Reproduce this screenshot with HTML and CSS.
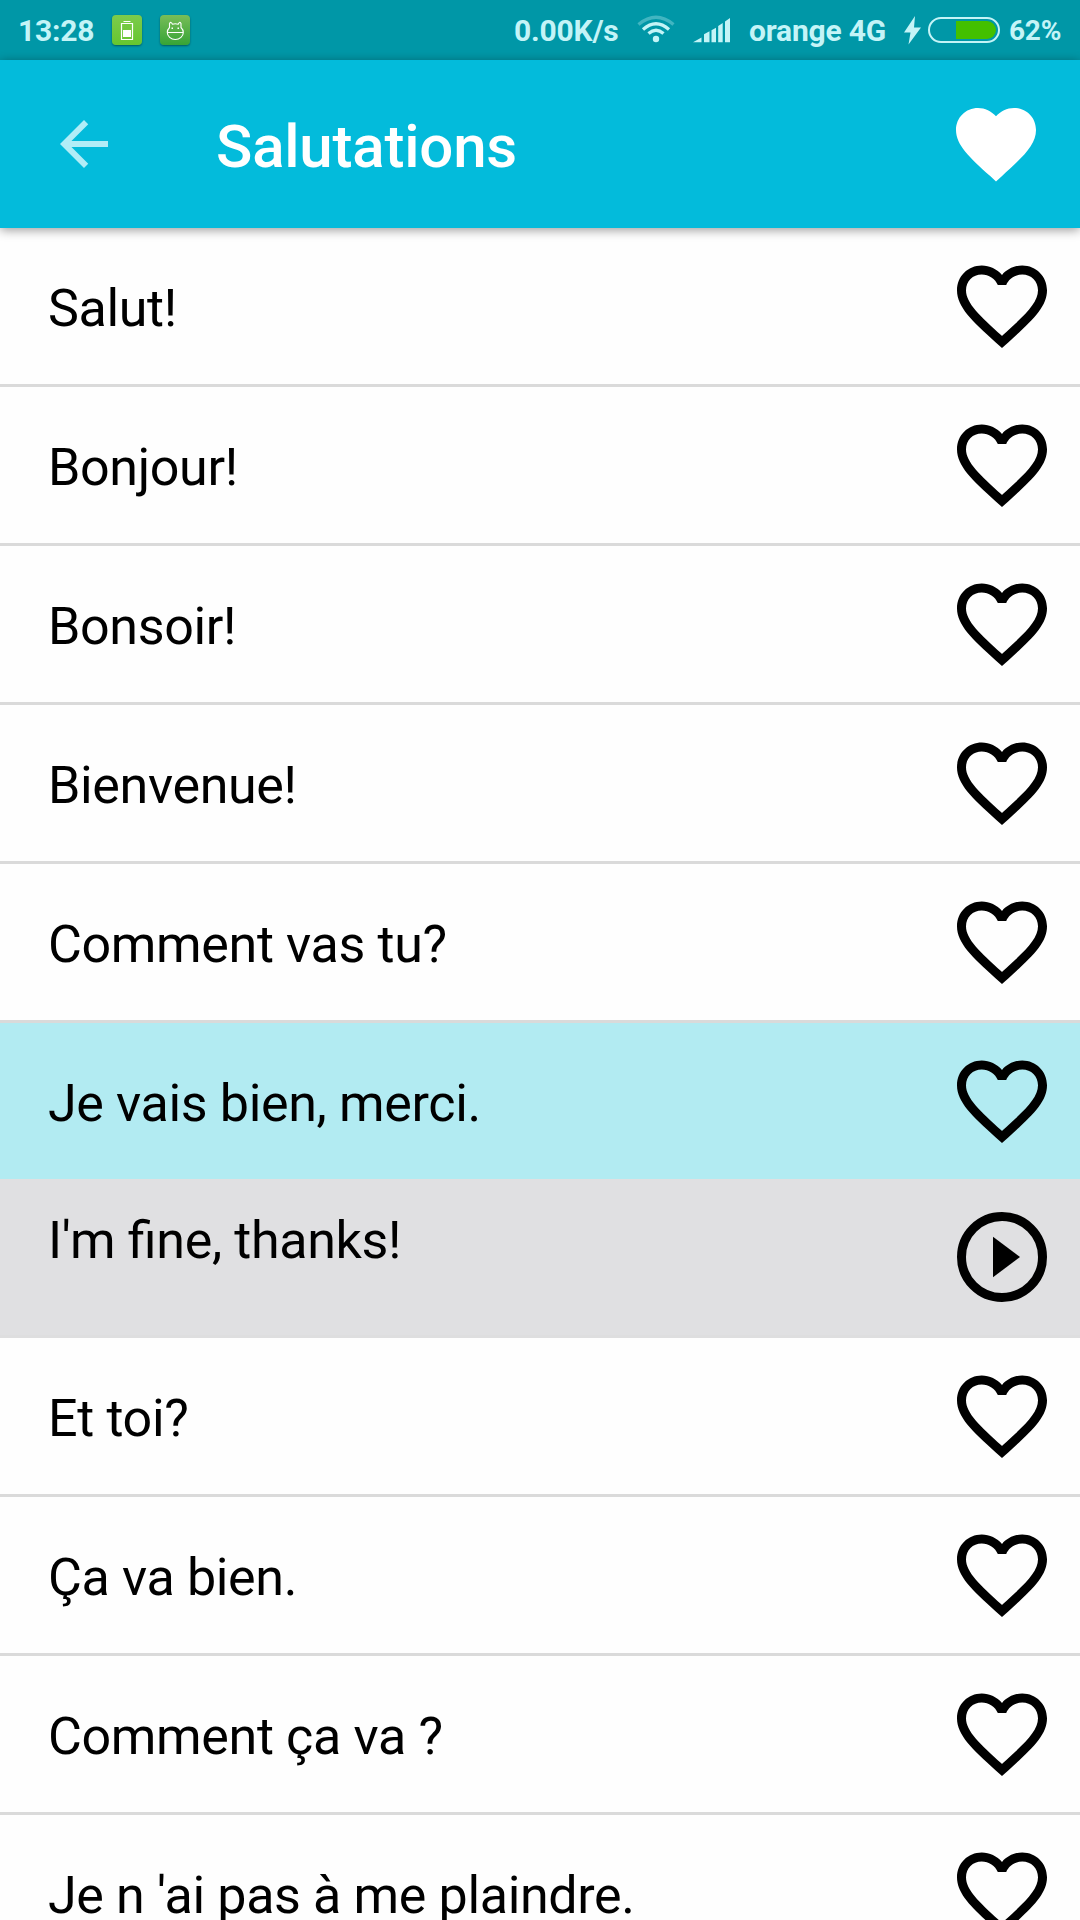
FILE: index.html
```html
<!DOCTYPE html>
<html lang="fr">
<head>
<meta charset="utf-8">
<title>Salutations</title>
<link rel="stylesheet" href="styles.css">
</head>
<body>
<svg class="defs" width="0" height="0" aria-hidden="true">
  <symbol id="heart-outline" viewBox="0 0 24 24"><path d="M16.5 3c-1.74 0-3.41.81-4.5 2.09C10.91 3.81 9.24 3 7.5 3 4.42 3 2 5.42 2 8.5c0 3.78 3.4 6.86 8.55 11.54L12 21.35l1.45-1.32C18.6 15.36 22 12.28 22 8.5 22 5.42 19.58 3 16.5 3zm-4.4 15.55l-.1.1-.1-.1C7.14 14.24 4 11.39 4 8.5 4 6.5 5.5 5 7.5 5c1.54 0 3.04.99 3.57 2.36h1.87C13.46 5.99 14.96 5 16.5 5c2 0 3.5 1.5 3.5 3.5 0 2.89-3.14 5.74-7.9 10.05z"/></symbol>
</svg>
<div class="screen">
  <div class="status">
    <span class="clock">13:28</span>
    <span class="badge badge-light"><svg width="30" height="30" viewBox="0 0 30 30"><path d="M9.5 8.5h11v16h-11zM11.5 6.500h7" fill="none" stroke="#fff" stroke-width="1.2"/><path d="M11 15h8v7h-8z" fill="#fff"/></svg></span>
    <span class="badge badge-dark"><svg width="30" height="30" viewBox="0 0 30 30"><path d="M9.500 12.500V8.500Q11 6 12.500 9.200q2.800-.9 5.600 0Q19.500 6 21 8.500v4q2.300 2.200 2.300 5a8 7 0 0 1-16 0q0-2.800 2.200-5zM7 17.500h16.500" fill="none" stroke="#fff" stroke-width="1.1"/><path d="M11.500 12.500H13V14h-1.500zM17.500 12.500H19V14h-1.500z" fill="#fff"/></svg></span>
    <span class="speed">0.00K/s</span>
    <svg class="wifi" width="38" height="28" viewBox="0 0 38 28"><circle cx="19" cy="24" r="3.200" fill="#c4f4f7"/><g fill="none" stroke="#c4f4f7" stroke-width="3.300"><path d="M11.500 18.500q7.500-6.500 15 0M6 14.500q13-11.500 26 0"/><path d="M1.500 9.500q17.500-14.500 35 0" stroke-opacity=".33"/></g></svg>
    <svg class="signal" width="38" height="26" viewBox="0 0 38 26"><path d="M0 25.300 8.500 20.500V25.300zM11 17.300l5.500-3V25.300H11zM18.500 13.300l4.500-2.500V25.300h-4.500zM25.200 9l4.500-3V25.300h-4.500zM32 4.500l5-3.500V25.300h-5z" fill="#c4f4f7"/></svg>
    <span class="carrier">orange 4G</span>
    <svg class="bolt" width="17" height="29" viewBox="0 0 17 29"><path d="M11 0 0 16.500h6.500L4.500 28.500 17 11.500h-7z" fill="#c4f4f7"/></svg>
    <span class="battery"><span class="charge"></span></span>
    <span class="percent">62%</span>
  </div>
  <header class="toolbar">
    <svg class="back" width="72" height="72" viewBox="0 0 24 24"><path d="M20 11H7.830l5.590-5.590L12 4l-8 8 8 8 1.410-1.410L7.830 13H20v-2z" fill="#b2edf7"/></svg>
    <h1 class="title">Salutations</h1>
    <svg class="favorite" width="96" height="96" viewBox="0 0 24 24"><path d="M12 21.350l-1.450-1.320C5.400 15.360 2 12.280 2 8.500 2 5.420 4.420 3 7.500 3c1.740 0 3.410.81 4.500 2.090C13.090 3.810 14.760 3 16.500 3 19.580 3 22 5.420 22 8.500c0 3.780-3.400 6.860-8.550 11.540L12 21.350z" fill="#fff"/></svg>
  </header>
  <main class="list">
    <div class="row"><span class="phrase">Salut!</span><svg class="icon"><use href="#heart-outline"/></svg></div>
    <div class="row"><span class="phrase">Bonjour!</span><svg class="icon"><use href="#heart-outline"/></svg></div>
    <div class="row"><span class="phrase">Bonsoir!</span><svg class="icon"><use href="#heart-outline"/></svg></div>
    <div class="row"><span class="phrase">Bienvenue!</span><svg class="icon"><use href="#heart-outline"/></svg></div>
    <div class="row"><span class="phrase">Comment vas tu?</span><svg class="icon"><use href="#heart-outline"/></svg></div>
    <div class="row selected"><span class="phrase">Je vais bien, merci.</span><svg class="icon"><use href="#heart-outline"/></svg></div>
    <div class="row translation"><span class="phrase">I'm fine, thanks!</span><svg class="icon" viewBox="0 0 24 24"><circle cx="12" cy="12" r="9" fill="none" stroke="#000" stroke-width="2"/><path d="M10 7.500v9l6-4.500z"/></svg></div>
    <div class="row"><span class="phrase">Et toi?</span><svg class="icon"><use href="#heart-outline"/></svg></div>
    <div class="row"><span class="phrase">Ça va bien.</span><svg class="icon"><use href="#heart-outline"/></svg></div>
    <div class="row"><span class="phrase">Comment ça va ?</span><svg class="icon"><use href="#heart-outline"/></svg></div>
    <div class="row"><span class="phrase">Je n 'ai pas à me plaindre.</span><svg class="icon"><use href="#heart-outline"/></svg></div>
  </main>
</div>
</body>
</html>
```
FILE: styles.css
```css
* { box-sizing: border-box; }
html, body { margin: 0; }
body { font-family: Roboto, sans-serif; background: #fefefe; color: #000; }
svg { display: block; flex: none; }
.defs { position: absolute; }

.screen {
  width: 1080px;
  height: 1920px;
  overflow: hidden;
  display: flex;
  flex-direction: column;
}

.status {
  flex: none;
  height: 60px;
  display: flex;
  align-items: center;
  padding: 0 19px 0 18px;
  background: #0097a7;
  color: #c4f4f7;
  font-size: 30px;
  font-weight: 700;
  letter-spacing: -0.2px;
  line-height: 60px;
  white-space: nowrap;
}
.clock, .speed, .carrier, .percent { padding-top: 2px; }
.clock { width: 94px; }
.badge { width: 30px; height: 30px; border-radius: 4px; box-shadow: 0 1px 2px rgba(0, 50, 50, .6); }
.badge-light { background: linear-gradient(#7ccb4c, #66c62f); }
.badge-dark { margin-left: 18px; background: linear-gradient(#78bd58, #36a436); }
.speed { margin-left: auto; width: 123px; }
.wifi { width: 38px; margin-bottom: 2px; }
.signal { margin-left: 18px; }
.carrier { margin-left: 18px; width: 155px; }
.bolt { margin-right: 7px; }
.battery {
  flex: none;
  width: 72px;
  height: 26px;
  padding: 2px;
  border: 2px solid #c4f4f7;
  border-radius: 13px;
  display: flex;
  justify-content: flex-end;
}
.charge { width: 40px; background: #43c000; border-radius: 0 9px 9px 0; }
.percent { width: 52px; margin-left: 9px; font-size: 28px; }

.toolbar {
  flex: none;
  height: 168px;
  display: flex;
  align-items: center;
  padding: 0 36px 0 48px;
  background: #03bbdb;
  box-shadow: 0 2px 10px rgba(0, 0, 0, .4);
  z-index: 1;
}
.title { margin: 5px auto 0 96px; color: #fff; font-size: 60px; font-weight: 500; line-height: 72px; letter-spacing: -0.2px; }

.list { flex: none; }
.row {
  height: 159px;
  display: flex;
  align-items: flex-start;
  justify-content: space-between;
  padding: 24px 24px 0 48px;
  border-bottom: 3px solid #dadada;
  background: #fefefe;
}
.phrase {
  padding-top: 26px;
  font-size: 52px;
  line-height: 61px;
  letter-spacing: -0.35px;
  font-feature-settings: "liga" 1;
  white-space: nowrap;
}
.icon { width: 108px; height: 108px; }
.selected { height: 156px; border-bottom: 0; background: #b2ebf2; }
.translation { background: #e0e0e2; border-bottom-color: #dededf; }
.translation .phrase { padding-top: 7px; }
```
